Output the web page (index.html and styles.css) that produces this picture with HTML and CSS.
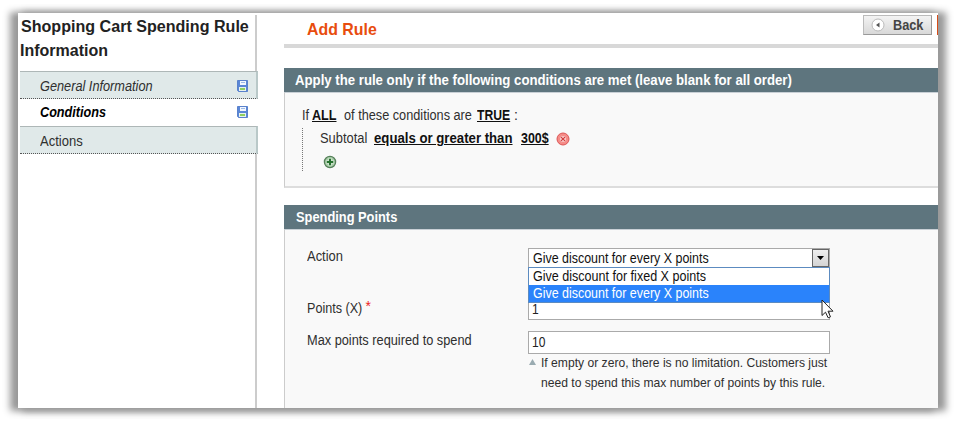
FILE: index.html
```html
<!DOCTYPE html>
<html lang="en">
<head>
<meta charset="utf-8">
<title>Add Rule</title>
<link rel="stylesheet" href="styles.css">
</head>
<body>
<svg class="defs" width="0" height="0">
  <symbol id="disk" viewBox="0 0 11 12">
    <path d="M.5.5h10v11H1.500l-1-1z" fill="#5b87d6" stroke="#5a82cc"/>
    <path d="M3 1h6v4h-6z" fill="#f2f7ff"/>
    <path d="M4 2.500h4" stroke="#9db9e8"/>
    <path d="M2 7h7v4H2z" fill="#e8f2ee"/>
    <path d="M3 8h5v2H3z" fill="#8fd060"/>
  </symbol>
</svg>
<div class="frame">
  <aside class="side">
    <h3><span class="t1">Shopping Cart Spending Rule</span><br><span class="t2">Information</span></h3>
    <nav>
      <a class="tab changed"><span class="n1">General Information</span><svg width="11" height="12"><use href="#disk"/></svg></a>
      <a class="tab changed active"><span class="n2">Conditions</span><svg width="11" height="12"><use href="#disk"/></svg></a>
      <a class="tab"><span class="n3">Actions</span></a>
    </nav>
  </aside>
  <main>
    <header class="top">
      <h1><span class="ttl">Add Rule</span></h1>
      <button class="back"><svg width="14" height="14" viewBox="0 0 14 14"><circle cx="7" cy="7" r="6" fill="#fff" stroke="#bbb"/><path d="M8.500 4.500v5L5 7z" fill="#555"/></svg><span class="bk">Back</span></button>
      <div class="save"></div>
    </header>
    <section class="box conditions">
      <h2><span class="h1t">Apply the rule only if the following conditions are met (leave blank for all order)</span></h2>
      <div class="content">
        <p class="cond"><span class="c1">If</span><b class="c2">ALL</b><span class="c3">of these conditions are</span><b class="c4">TRUE</b><span class="c5">:</span></p>
        <div class="children">
          <p class="cond child"><span class="s1">Subtotal</span><b class="s2">equals or greater than</b><b class="s3">300$</b><svg width="14" height="14" viewBox="0 0 14 14"><circle cx="7" cy="7" r="6" fill="#f58b87" stroke="#dc5555"/><path d="M4.700 4.700l4.600 4.600M9.300 4.700L4.700 9.300" stroke="#fff" stroke-width="2.800"/><path d="M4.700 4.700l4.600 4.600M9.300 4.700L4.700 9.300" stroke="#d43f3f" stroke-width="1.300"/></svg></p>
          <svg class="add" width="14" height="14" viewBox="0 0 14 14"><circle cx="7" cy="7" r="5.600" fill="#a9cda9" stroke="#56805a" stroke-width="1.300"/><path d="M7 3.300v7.400M3.300 7h7.400" stroke="#cfe4cf" stroke-width="3.600"/><path d="M7 3.800v6.400M3.800 7h6.400" stroke="#26722f" stroke-width="2"/></svg>
        </div>
      </div>
    </section>
    <section class="box points">
      <h2><span class="h2t">Spending Points</span></h2>
      <div class="content form">
        <label class="l1"><span class="la">Action</span></label>
        <div class="select"><span class="o">Give discount for every X points</span><i><svg width="7" height="4"><path d="M0 0h7L3.500 4z"/></svg></i>
          <div class="menu"><div><span class="o2">Give discount for fixed X points</span></div><div class="on"><span class="o">Give discount for every X points</span></div></div>
          <svg class="cursor" width="13" height="20" viewBox="0 0 13 20"><path d="M1 1v15.500l3.500-3.300 2.600 5.600 2.400-1-2.500-5.600H12z" fill="#fff" stroke="#222"/></svg>
        </div>
        <label class="l2"><span class="lb">Points (X)</span><em>*</em></label>
        <div class="input first"><span class="v">1</span></div>
        <label class="l3"><span class="lc">Max points required to spend</span></label>
        <div class="input"><span class="v">10</span></div>
        <p class="note"><svg width="7" height="6"><path d="M3.500 0L7 6H0z" fill="#9aabb1"/></svg><span class="q">If empty or zero, there is no limitation. Customers just<br>need to spend this max number of points by this rule.</span></p>
      </div>
    </section>
  </main>
</div>
</body>
</html>
```
FILE: styles.css
```css
* { box-sizing: border-box; margin: 0; padding: 0; }
body { width: 956px; height: 421px; padding: 13px 18px; background: #fff; overflow: hidden; font: 14px/18px "Liberation Sans", Arial, sans-serif; color: #2f2f2f; }
.defs { display: block; position: absolute; }
svg { display: block; flex: none; }
/* Condensed labels: each class below sets its own horizontal scale */
span, b { display: inline-block; white-space: nowrap; transform-origin: 0 50%; }
.frame { display: flex; width: 920px; height: 395px; background: #fff; box-shadow: 6px 1px 7px 2px #999, -6px 1px 7px 2px #999; }
.side { width: 240px; padding: 2px 0 0 2px; background: linear-gradient(#ccc, #ccc) 237px 2px / 2px 100% no-repeat; }
.side h3 { height: 56px; font-size: 16px; line-height: 24px; color: #222; }
.t1 { margin-left: 1px; transform: scaleX(1.005); }
.tab { display: flex; align-items: center; justify-content: space-between; width: 238px; height: 28px; padding: 1px 8px 0 20px; background: #e0e9e9; border-top: 1px solid #aeb7b7; border-bottom: 1px dotted #555; border-right: 2px solid #b9c8c8; }
.changed { font-style: italic; }
.active { height: 27px; padding: 0 8px 1px 20px; background: #fff; border-color: #fff; border-bottom: 0; border-top: 0; font-weight: bold; color: #000; }
.n1 { transform: scaleX(.91); }
.n2 { transform: scaleX(.904); }
.n3 { transform: scaleX(.93); }
main { flex: 1; padding-left: 26px; overflow: hidden; }
.top { display: flex; align-items: flex-start; height: 35px; border-bottom: 4px solid #d8d8d8; }
.top h1 { flex: 1; padding: 5px 0 0 23px; font-size: 17px; line-height: 24px; color: #e84c0e; }
.ttl { transform: scaleX(.935); }
.back { display: flex; align-items: center; width: 69px; height: 20px; margin-top: 2px; padding-left: 7px; gap: 8px; border: 1px solid #bbb; border-right-color: #999; border-bottom-color: #999; background: linear-gradient(#f3f3f3, #d8d8d8); font: bold 14px/18px "Liberation Sans", Arial, sans-serif; color: #444; }
.bk { transform: scaleX(.91); }
.save { flex: none; width: 1px; height: 20px; margin: 2px 0 0 5px; background: #d84c17; }
.box { margin-top: 20px; }
.points { margin-top: 17px; }
.box h2 { height: 24px; padding-left: 11px; background: #5e757e; font-size: 14px; line-height: 24px; color: #fff; }
.h1t { transform: scaleX(.942); }
.h2t { margin-left: 1px; transform: scaleX(.917); }
.content { border: 1px solid #ccc; border-right: 0; border-top-color: #c9d0d6; background: #f9f9f9; }
.conditions .content { height: 96px; padding: 12px 0 0 17px; border-bottom: 2px solid #ddd; }
.cond { display: flex; height: 20px; line-height: 20px; }
.cond b { color: #111; text-decoration: underline; }
.c1 { transform: scaleX(.9); }
.c2 { margin: 0 -3px 0 2px; transform: scaleX(.9); }
.c3 { margin: 0 -13px 0 8px; transform: scaleX(.908); }
.c4 { margin: 0 -5px 0 5px; transform: scaleX(.87); }
.c5 { margin-left: 4px; }
.children { height: 43px; margin-top: 3px; padding-left: 17px; border-left: 1px dotted #777; }
.s1 { margin-right: -5px; transform: scaleX(.92); }
.s2 { margin: 0 -9px 0 8px; transform: scaleX(.942); }
.s3 { margin: 0 -4px 0 9px; transform: scaleX(.887); }
.child svg { margin: 4px 0 0 7px; }
.add { margin: 7px 0 0 3px; }
.form { display: grid; grid-template-columns: 221px 302px; grid-template-rows: 51px 32px 24px 60px; height: 179px; padding: 18px 0 0 22px; border-bottom: 0; }
.form em { color: #e22; font-style: normal; line-height: 14px; vertical-align: 2px; }
.l1, .l2 { line-height: 16px; }
.l3 { line-height: 18px; }
.la { transform: scaleX(.925); }
.lb { margin-right: -3px; transform: scaleX(.9); }
.lc { transform: scaleX(.912); }
.select { position: relative; height: 20px; border: 1px solid #aaa; background: #fff; padding-left: 4px; line-height: 18px; color: #111; }
.o { transform: scaleX(.889); }
.o2 { transform: scaleX(.896); }
.select i { position: absolute; right: 0; top: 0; display: grid; place-items: center; width: 17px; height: 18px; border: 1px solid #666; background: linear-gradient(#eee, #d4d4d4); }
.menu { position: absolute; z-index: 2; left: -1px; top: 18px; width: 302px; height: 36px; border: 1px solid #5c8bc0; background: #fff; line-height: 16px; }
.menu div { height: 17px; padding-left: 4px; }
.menu .on { background: #2a83fb; color: #fff; }
.cursor { position: absolute; z-index: 3; left: 292px; top: 50px; }
.input { height: 23px; border: 1px solid #aaa; background: #fff; padding-left: 3px; line-height: 20px; color: #222; }
.input.first { height: 21px; line-height: 18px; }
.v { transform: scaleX(.86); }
.note { grid-column: 2; display: flex; gap: 5px; padding-left: 1px; line-height: 19.5px; font-size: 13px; }
.note svg { margin-top: 4px; }
.q { margin-top: -2px; transform: scaleX(.932); }
```
